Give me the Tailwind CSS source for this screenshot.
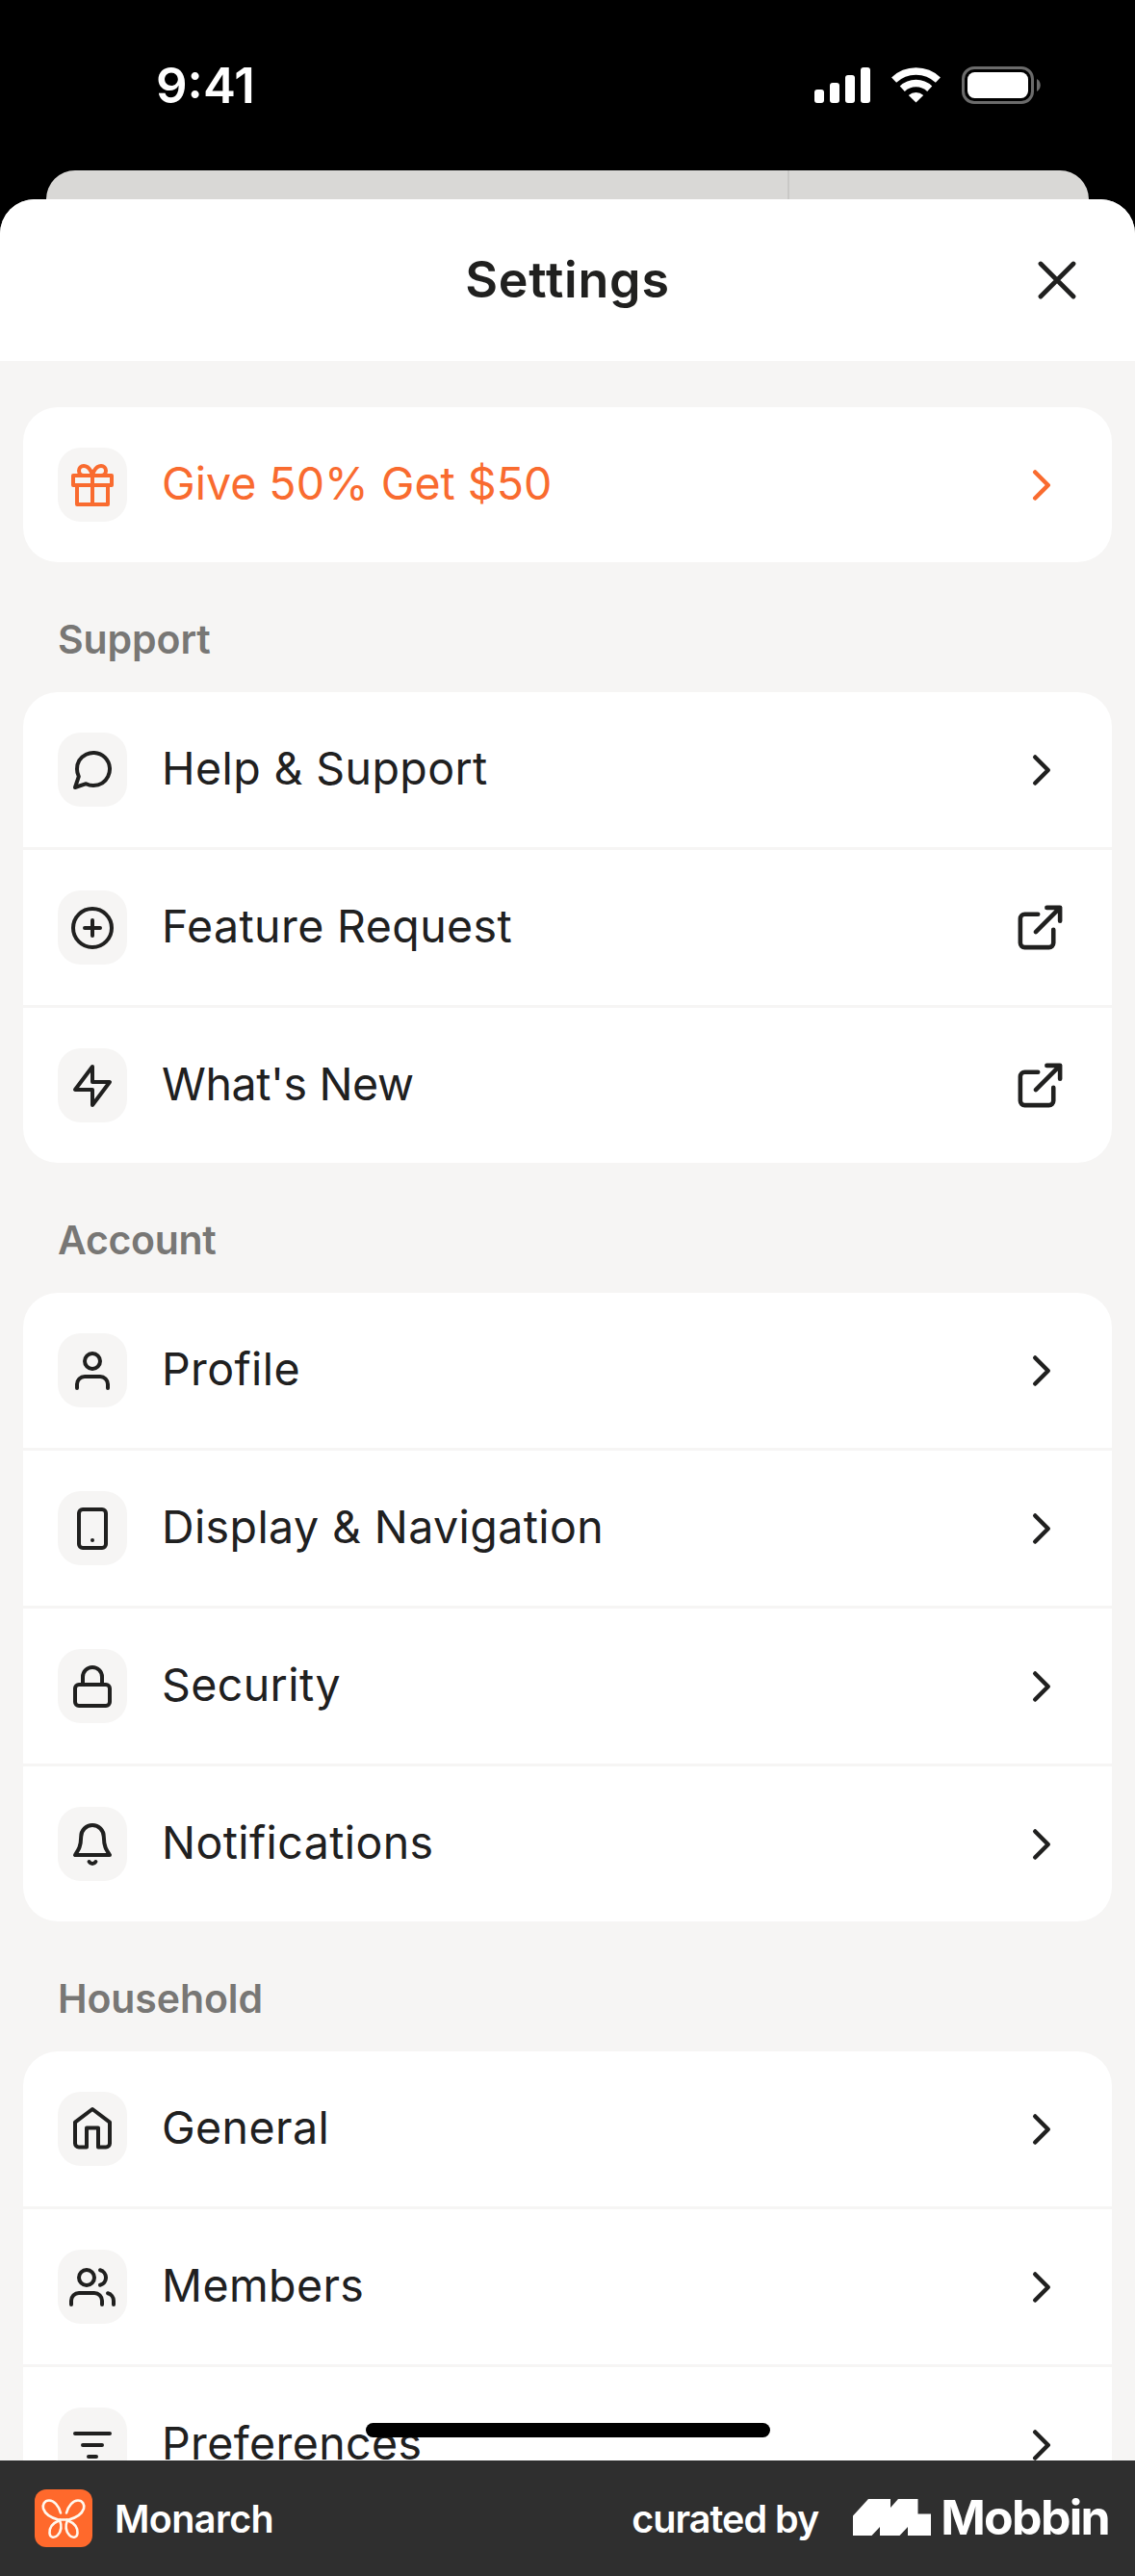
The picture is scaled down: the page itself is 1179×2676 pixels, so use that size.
<!DOCTYPE html>
<html lang="en">
<head>
  <meta charset="UTF-8" />
  <meta name="viewport" content="width=device-width, initial-scale=1.0"/>
  <title>Settings - Monarch</title>
  <script src="https://cdn.jsdelivr.net/npm/@tailwindcss/browser@4"></script>
</head>
<body class="bg-black font-['Inter','Liberation_Sans',sans-serif] text-[#20201f]">

  <!-- icon sprite -->
  <svg class="hidden">
    <symbol id="gift" viewBox="0 0 24 24"><path d="M20 12v10H4V12M2 7h20v5H2zM12 22V7M12 7H7.5a2.5 2.5 0 0 1 0-5C11 2 12 7 12 7zM12 7h4.5a2.5 2.5 0 0 0 0-5C13 2 12 7 12 7z"/></symbol>
    <symbol id="message" viewBox="0 0 24 24"><path d="M21 11.5a8.38 8.38 0 0 1-.9 3.8 8.5 8.5 0 0 1-7.6 4.7 8.38 8.38 0 0 1-3.8-.9L3 21l1.9-5.7a8.38 8.38 0 0 1-.9-3.8 8.5 8.5 0 0 1 4.7-7.6 8.38 8.38 0 0 1 3.8-.9h.5a8.48 8.48 0 0 1 8 8z"/></symbol>
    <symbol id="plus" viewBox="0 0 24 24"><circle cx="12" cy="12" r="10"/><path d="M12 8v8M8 12h8"/></symbol>
    <symbol id="zap" viewBox="0 0 24 24"><path d="M12 2 3 14h9v8l9-12h-9z"/></symbol>
    <symbol id="user" viewBox="0 0 24 24"><path d="M20 21v-2a4 4 0 0 0-4-4H8a4 4 0 0 0-4 4v2"/><circle cx="12" cy="7" r="4"/></symbol>
    <symbol id="phone" viewBox="0 0 24 24"><rect x="5" y="2" width="14" height="20" rx="2"/><path d="M12 18h.01"/></symbol>
    <symbol id="lock" viewBox="0 0 24 24"><rect x="3" y="11" width="18" height="11" rx="2"/><path d="M7 11V7a5 5 0 0 1 10 0v4"/></symbol>
    <symbol id="bell" viewBox="0 0 24 24"><path d="M17.9 8A5.9 6 0 0 0 6.1 8C6 13 5 14.5 3 17.5h18C19 14.5 18 13 17.9 8zM10.3 21a2 2 0 0 0 3.4 0"/></symbol>
    <symbol id="home" viewBox="0 0 24 24"><path d="M12 1.5 3 8.3v11a2 2 0 0 0 2 2h4v-10h6v10h4a2 2 0 0 0 2-2v-11z"/></symbol>
    <symbol id="users" viewBox="0 0 24 24"><path d="M17 21v-2a4 4 0 0 0-4-4H5a4 4 0 0 0-4 4v2M23 21v-2a4 4 0 0 0-3-3.87M16 3.13a4 4 0 0 1 0 7.75"/><circle cx="9" cy="7" r="4"/></symbol>
    <symbol id="filter" viewBox="0 0 24 24"><path d="M3 6h18M7 12h10M10 18h4"/></symbol>
    <symbol id="chevron" viewBox="0 0 24 24"><path d="m9 18 6-6-6-6"/></symbol>
    <symbol id="external" viewBox="0 0 24 24"><path d="M18 13v6a2 2 0 0 1-2 2H5a2 2 0 0 1-2-2V8a2 2 0 0 1 2-2h6M15 3h6v6M10 14 21 3"/></symbol>
  </svg>

  <div class="flex flex-col w-[1179px] h-[2676px] overflow-hidden">

    <!-- status bar -->
    <div class="flex shrink-0 items-center justify-between h-[177px] pl-[162px] pr-[98px] text-white">
      <span class="text-[51px] font-semibold leading-none">9:41</span>
      <div class="flex items-center">
        <svg class="w-[58px] h-[37px] mr-[22px]" viewBox="0 0 58 37" fill="currentColor">
          <rect x="0" y="23" width="10" height="14" rx="3"/>
          <rect x="16" y="16" width="10" height="21" rx="3"/>
          <rect x="32" y="8" width="10" height="29" rx="3"/>
          <rect x="48" y="0" width="10" height="37" rx="3"/>
        </svg>
        <svg class="w-[51px] h-[37px] mr-[22px]" viewBox="0 0 51 37" fill="none" stroke="currentColor" stroke-width="7.4">
          <path d="M2.6 13.1a33.3 33.3 0 0 1 45.8 0M11.3 22.2a20.6 20.6 0 0 1 28.4 0"/>
          <path d="M25.5 36.5 17.8 29a11.7 11.7 0 0 1 15.4 0z" fill="currentColor" stroke="none"/>
        </svg>
        <svg class="w-[82px] h-[39px]" viewBox="0 0 82 39">
          <rect x="1.5" y="1.5" width="72" height="36" rx="11.5" fill="none" stroke="#6b6b6b" stroke-width="3"/>
          <rect x="6" y="6" width="63" height="27" rx="7.5" fill="#fff"/>
          <path d="M78 13c5 2.5 5 10.5 0 13z" fill="#6b6b6b"/>
        </svg>
      </div>
    </div>

    <!-- screen behind the sheet -->
    <div class="flex shrink-0 h-[30px] mx-[48px] rounded-t-[30px] bg-[#d9d8d6]">
      <div class="w-[772px] border-r-2 border-[#c9c8c6]"></div>
    </div>

    <main class="flex-1 min-h-0 overflow-hidden rounded-t-[36px] bg-[#f6f5f4]">
      <header class="grid grid-cols-[100px_1fr_100px] items-center h-[168px] bg-white">
        <h1 class="col-start-2 pb-px text-center text-[52px] font-semibold leading-none tracking-[0.8px]">Settings</h1>
        <svg class="w-[40px] h-[40px] ml-[-1px]" viewBox="0 0 40 40" fill="none" stroke="currentColor" stroke-width="4.8" stroke-linecap="round"><path d="m3 3 34 34M37 3 3 37"/></svg>
      </header>

      <div class="px-[24px] pt-[48px] text-[46.5px] font-[440] leading-none tracking-[0.4px]">
        <section class="rounded-[36px] bg-white text-[#f96b2f]">
          <a class="flex items-center h-[161px] pl-[36px] pr-[46px]">
            <span class="flex items-center justify-center w-[72px] h-[77px] mr-[36px] rounded-[24px] bg-[#f6f5f4]">
              <svg class="size-[48px] fill-none stroke-current stroke-2 [stroke-linecap:round] [stroke-linejoin:round]"><use href="#gift"/></svg>
            </span>
            <span class="flex-1 pb-[3px] tracking-[0px]">Give 50% Get $50</span>
            <svg class="size-[54px] fill-none stroke-current stroke-2 [stroke-linecap:round] [stroke-linejoin:round]"><use href="#chevron"/></svg>
          </a>
        </section>

        <h2 class="flex items-center h-[135px] pt-[26px] pl-[36px] text-[41px] font-semibold tracking-[-0.1px] text-[#787775]">Support</h2>
        <section class="divide-y-3 divide-[#f6f5f4] rounded-[36px] bg-white">
          <a class="flex items-center h-[164px] pl-[36px] pr-[46px]">
            <span class="flex items-center justify-center w-[72px] h-[77px] mr-[36px] rounded-[24px] bg-[#f6f5f4]">
              <svg class="size-[48px] fill-none stroke-current stroke-2 [stroke-linecap:round] [stroke-linejoin:round]"><use href="#message"/></svg>
            </span>
            <span class="flex-1 pb-[3px]">Help &amp; Support</span>
            <svg class="size-[54px] fill-none stroke-current stroke-2 [stroke-linecap:round] [stroke-linejoin:round]"><use href="#chevron"/></svg>
          </a>
          <a class="flex items-center h-[164px] pl-[36px] pr-[47px]">
            <span class="flex items-center justify-center w-[72px] h-[77px] mr-[36px] rounded-[24px] bg-[#f6f5f4]">
              <svg class="size-[48px] fill-none stroke-current stroke-2 [stroke-linecap:round] [stroke-linejoin:round]"><use href="#plus"/></svg>
            </span>
            <span class="flex-1 pb-[3px]">Feature Request</span>
            <svg class="size-[55px] fill-none stroke-current stroke-2 [stroke-linecap:round] [stroke-linejoin:round]"><use href="#external"/></svg>
          </a>
          <a class="flex items-center h-[161px] pl-[36px] pr-[47px]">
            <span class="flex items-center justify-center w-[72px] h-[77px] mr-[36px] rounded-[24px] bg-[#f6f5f4]">
              <svg class="size-[48px] fill-none stroke-current stroke-2 [stroke-linecap:round] [stroke-linejoin:round]"><use href="#zap"/></svg>
            </span>
            <span class="flex-1 pb-[3px] tracking-[-0.4px]">What's New</span>
            <svg class="size-[55px] fill-none stroke-current stroke-2 [stroke-linecap:round] [stroke-linejoin:round]"><use href="#external"/></svg>
          </a>
        </section>

        <h2 class="flex items-center h-[135px] pt-[26px] pl-[36px] text-[41px] font-semibold tracking-[-0.3px] text-[#787775]">Account</h2>
        <section class="divide-y-3 divide-[#f6f5f4] rounded-[36px] bg-white">
          <a class="flex items-center h-[164px] pl-[36px] pr-[46px]">
            <span class="flex items-center justify-center w-[72px] h-[77px] mr-[36px] rounded-[24px] bg-[#f6f5f4]">
              <svg class="size-[48px] fill-none stroke-current stroke-2 [stroke-linecap:round] [stroke-linejoin:round]"><use href="#user"/></svg>
            </span>
            <span class="flex-1 pb-[3px]">Profile</span>
            <svg class="size-[54px] fill-none stroke-current stroke-2 [stroke-linecap:round] [stroke-linejoin:round]"><use href="#chevron"/></svg>
          </a>
          <a class="flex items-center h-[164px] pl-[36px] pr-[46px]">
            <span class="flex items-center justify-center w-[72px] h-[77px] mr-[36px] rounded-[24px] bg-[#f6f5f4]">
              <svg class="size-[48px] fill-none stroke-current stroke-2 [stroke-linecap:round] [stroke-linejoin:round]"><use href="#phone"/></svg>
            </span>
            <span class="flex-1 pb-[3px]">Display &amp; Navigation</span>
            <svg class="size-[54px] fill-none stroke-current stroke-2 [stroke-linecap:round] [stroke-linejoin:round]"><use href="#chevron"/></svg>
          </a>
          <a class="flex items-center h-[164px] pl-[36px] pr-[46px]">
            <span class="flex items-center justify-center w-[72px] h-[77px] mr-[36px] rounded-[24px] bg-[#f6f5f4]">
              <svg class="size-[48px] fill-none stroke-current stroke-2 [stroke-linecap:round] [stroke-linejoin:round]"><use href="#lock"/></svg>
            </span>
            <span class="flex-1 pb-[3px]">Security</span>
            <svg class="size-[54px] fill-none stroke-current stroke-2 [stroke-linecap:round] [stroke-linejoin:round]"><use href="#chevron"/></svg>
          </a>
          <a class="flex items-center h-[161px] pl-[36px] pr-[46px]">
            <span class="flex items-center justify-center w-[72px] h-[77px] mr-[36px] rounded-[24px] bg-[#f6f5f4]">
              <svg class="size-[48px] fill-none stroke-current stroke-2 [stroke-linecap:round] [stroke-linejoin:round]"><use href="#bell"/></svg>
            </span>
            <span class="flex-1 pb-[3px]">Notifications</span>
            <svg class="size-[54px] fill-none stroke-current stroke-2 [stroke-linecap:round] [stroke-linejoin:round]"><use href="#chevron"/></svg>
          </a>
        </section>

        <h2 class="flex items-center h-[135px] pt-[26px] pl-[36px] text-[41px] font-semibold tracking-[-0.1px] text-[#787775]">Household</h2>
        <section class="divide-y-3 divide-[#f6f5f4] rounded-[36px] bg-white">
          <a class="flex items-center h-[164px] pl-[36px] pr-[46px]">
            <span class="flex items-center justify-center w-[72px] h-[77px] mr-[36px] rounded-[24px] bg-[#f6f5f4]">
              <svg class="size-[48px] fill-none stroke-current stroke-2 [stroke-linecap:round] [stroke-linejoin:round]"><use href="#home"/></svg>
            </span>
            <span class="flex-1 pb-[3px]">General</span>
            <svg class="size-[54px] fill-none stroke-current stroke-2 [stroke-linecap:round] [stroke-linejoin:round]"><use href="#chevron"/></svg>
          </a>
          <a class="flex items-center h-[164px] pl-[36px] pr-[46px]">
            <span class="flex items-center justify-center w-[72px] h-[77px] mr-[36px] rounded-[24px] bg-[#f6f5f4]">
              <svg class="size-[48px] fill-none stroke-current stroke-2 [stroke-linecap:round] [stroke-linejoin:round]"><use href="#users"/></svg>
            </span>
            <span class="flex-1 pb-[3px]">Members</span>
            <svg class="size-[54px] fill-none stroke-current stroke-2 [stroke-linecap:round] [stroke-linejoin:round]"><use href="#chevron"/></svg>
          </a>
          <a class="flex items-center h-[161px] pl-[36px] pr-[46px]">
            <span class="flex items-center justify-center w-[72px] h-[77px] mr-[36px] rounded-[24px] bg-[#f6f5f4]">
              <svg class="size-[48px] fill-none stroke-current stroke-2 [stroke-linecap:round] [stroke-linejoin:round]"><use href="#filter"/></svg>
            </span>
            <span class="flex-1 pb-[3px]">Preferences</span>
            <svg class="size-[54px] fill-none stroke-current stroke-2 [stroke-linecap:round] [stroke-linejoin:round]"><use href="#chevron"/></svg>
          </a>
        </section>
      </div>
    </main>

    <footer class="relative flex shrink-0 items-center h-[120px] pl-[36px] pr-[27px] bg-[#2f2f2f] text-white text-[39.5px] font-[560] leading-none">
      <!-- home indicator -->
      <div class="absolute left-[380px] -top-[39px] w-[420px] h-[15px] rounded-full bg-black"></div>

      <svg class="size-[60px] mr-[23px]" viewBox="0 0 60 60" fill="none" stroke="#fff8ee" stroke-width="2.6" stroke-linecap="round">
        <rect width="60" height="60" rx="12" fill="#ff692c" stroke="none"/>
        <path d="M27 24.5C25 17 20 11.5 15 11.5 10 11.5 8 16 9 20 11 26 17 29.5 24.5 31.5H35.5C43 29.5 49 26 51 20 52 16 50 11.5 45 11.5 40 11.5 35 17 33 24.5"/>
        <path d="M26 32C19 35 15 40 15.5 45.5 16 50.5 21 51 24 47.5 28 43 28 37 26 32zM34 32C41 35 45 40 44.5 45.5 44 50.5 39 51 36 47.5 32 43 32 37 34 32z"/>
      </svg>
      <span class="flex-1 pt-[3px] tracking-[-0.6px]">Monarch</span>
      <span class="pt-[3px] mr-[36px] tracking-[-1px]">curated by</span>
      <svg class="w-[81px] h-[38px] mr-[10px] mb-[2px]" viewBox="0 0 81 38" fill="currentColor">
        <path d="M0 17.5 16 0h23v9l8-9h20.5v15.5H81V38H57v-9l-8.5 9H28v-9l-8.5 9H0z"/>
      </svg>
      <span class="pb-[2px] text-[50px] font-bold tracking-[-1.7px]">Mobbin</span>
    </footer>
  </div>
</body>
</html>
